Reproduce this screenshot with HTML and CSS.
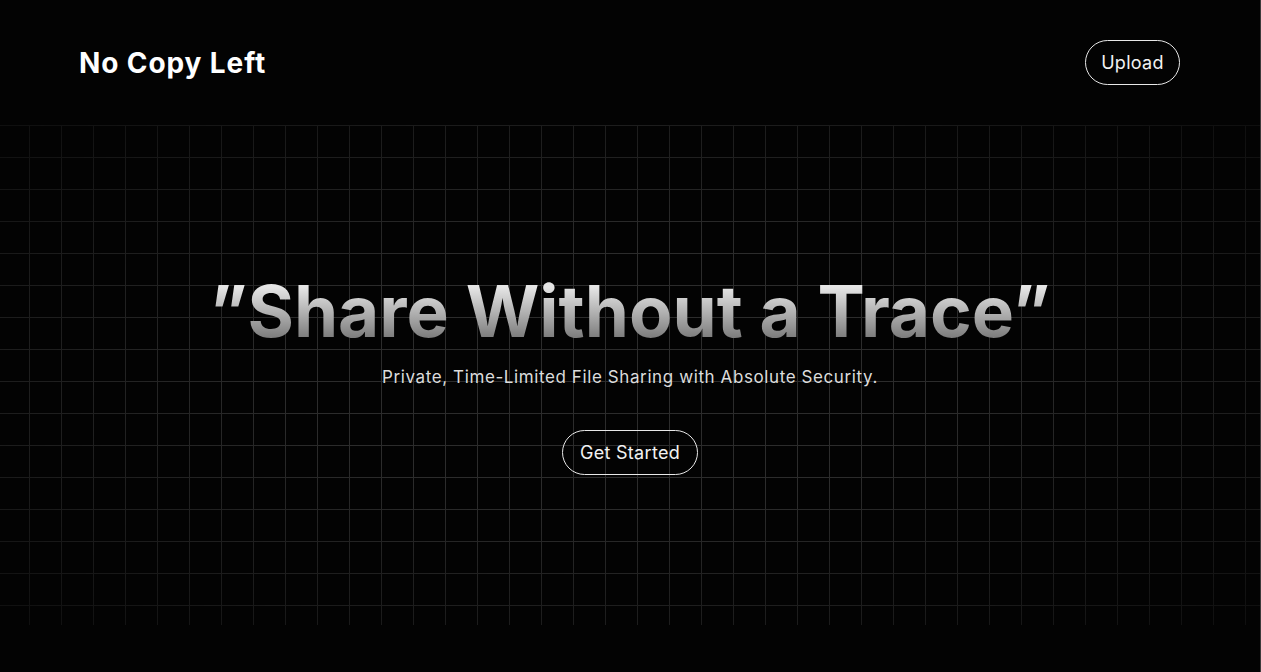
FILE: index.html
```html
<!DOCTYPE html>
<html lang="en">
<head>
<meta charset="utf-8">
<title>No Copy Left</title>
<link rel="stylesheet" href="styles.css">
</head>
<body>
<div class="page">
  <header class="header">
    <div class="logo">No Copy Left</div>
    <button class="pill pill-upload">Upload</button>
  </header>
  <section class="hero">
    <div class="grid"></div>
    <div class="hero-content">
      <h1 class="title">”Share Without a Trace”</h1>
      <p class="subtitle">Private, Time-Limited File Sharing with Absolute Security.</p>
      <button class="pill pill-start">Get Started</button>
    </div>
  </section>
</div>
</body>
</html>
```

FILE: styles.css
```css
* { box-sizing: border-box; }
html, body { margin: 0; padding: 0; }
body {
  background: #030303;
  color: #fff;
  font-family: "Inter", "Liberation Sans", sans-serif;
  height: 672px;
  overflow: hidden;
}
.page {
  height: 672px;
  border-right: 1px solid #3c3c3c;
}
.header {
  height: 125px;
  display: flex;
  align-items: center;
  justify-content: space-between;
  padding: 0 80px 0 79px;
}
.logo {
  font-size: 28px;
  font-weight: 700;
  letter-spacing: 0.9px;
}
.pill {
  background: transparent;
  color: #f2f2f2;
  border: 1px solid #e8e8e8;
  border-radius: 999px;
  font-family: "Inter", "Liberation Sans", sans-serif;
  font-size: 18px;
  font-weight: 400;
  height: 45px;
  cursor: pointer;
  letter-spacing: 0.3px;
}
.pill-upload { width: 95px; padding: 0; }
.pill-start { width: 136px; padding: 0; }
.hero {
  position: relative;
  height: 500px;
  display: flex;
  align-items: center;
  justify-content: center;
}
.grid {
  position: absolute;
  inset: 0;
  background-image:
    linear-gradient(to right, #2c2c2c 1px, transparent 1px),
    linear-gradient(to bottom, #2c2c2c 1px, transparent 1px);
  background-size: 32px 32px;
  background-position: 29px 0;
  -webkit-mask-image: radial-gradient(ellipse 75% 75% at 50% 50%, #000 35%, rgba(0,0,0,0.35) 90%, rgba(0,0,0,0.2) 100%);
  mask-image: radial-gradient(ellipse 75% 75% at 50% 50%, #000 35%, rgba(0,0,0,0.35) 90%, rgba(0,0,0,0.2) 100%);
}
.hero-content {
  position: relative;
  display: flex;
  flex-direction: column;
  align-items: center;
  margin-top: -5px;
}
.title {
  margin: 0;
  font-size: 71px;
  font-weight: 700;
  line-height: 80px;
  letter-spacing: 0;
  background: linear-gradient(to bottom, #e6e6e6 20%, #7a7a7a 85%);
  -webkit-background-clip: text;
  background-clip: text;
  color: transparent;
}
.subtitle {
  margin: 16px 0 43px;
  font-size: 17px;
  color: #dcdcdc;
  letter-spacing: 0.6px;
}
```
